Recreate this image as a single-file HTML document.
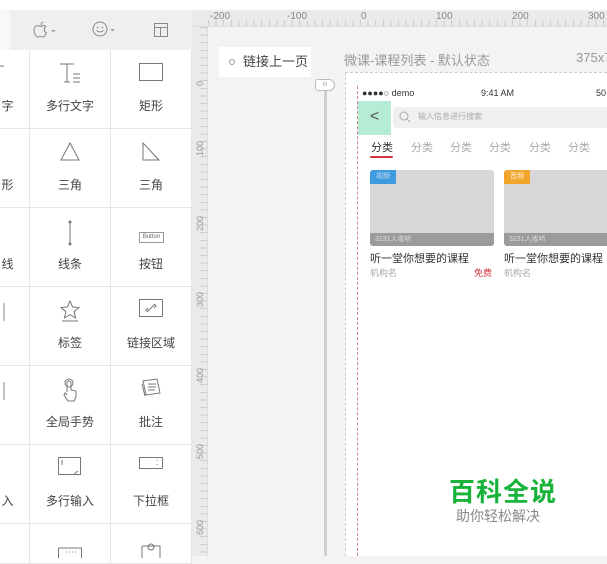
<!DOCTYPE html><html><head><meta charset="utf-8"><style>
*{margin:0;padding:0;box-sizing:border-box}
body{width:607px;height:556px;overflow:hidden;background:#f3f3f4;font-family:"Liberation Sans","Noto Sans CJK SC",sans-serif;position:relative;color:#333}
.a{position:absolute}
.cell{position:absolute;border-right:1px solid #e6e6e8;border-bottom:1px solid #e6e6e8;background:#fff;text-align:center;font-size:12px;color:#444;overflow:hidden}
.cell svg{position:absolute;left:50%;transform:translateX(-50%);top:12px}
.cell span{position:absolute;left:0;right:0;top:47px}
.vr{position:absolute;left:192px;width:16px;font-size:9px;color:#999;transform:rotate(-90deg)}
.hr{position:absolute;top:11px;font-size:10px;color:#888}
.tab{position:absolute;top:139px;font-size:11px;color:#aaa}
</style></head><body>
<div class="a" style="left:0;top:0;width:607px;height:10px;background:#fff"></div>
<div class="a" style="left:10px;top:10px;width:182px;height:40px;background:#efeff1"></div>
<div class="a" style="left:0;top:10px;width:10px;height:40px;background:#f8f8f8"></div>
<svg class="a" style="left:32px;top:21px" width="26" height="18"><path d="M7 5c-2-1-5 0-5 4 0 4 2.5 7 4 7 1 0 1.5-.6 2.5-.6s1.5.6 2.5.6c1.5 0 3-2.5 3.5-4-1.5-.7-2.3-2-2.3-3.5 0-1.3.7-2.3 1.6-2.9C13 4.5 11.8 4.4 11 4.6 10 4.9 9 5.5 8 5.2z M9 4c0-1.5 1-2.8 2.5-3" fill="none" stroke="#888"/><path d="M19 9l2.5 2.5L24 9z" fill="#aaa"/></svg>
<svg class="a" style="left:92px;top:21px" width="26" height="18"><circle cx="8" cy="8" r="7" fill="none" stroke="#888"/><circle cx="5.5" cy="6.5" r=".8" fill="#888"/><circle cx="10.5" cy="6.5" r=".8" fill="#888"/><path d="M4.5 9.5q3.5 3 7 0" fill="none" stroke="#888"/><path d="M18 8l2.5 2.5 2.5-2.5z" fill="#aaa"/></svg>
<svg class="a" style="left:154px;top:23px" width="14" height="14"><rect x=".5" y=".5" width="13" height="13" fill="none" stroke="#888"/><path d="M.5 4.5h13M6.5 4.5v9" stroke="#888"/></svg>
<div class="a" style="left:0;top:50px;width:192px;height:506px;background:#fff"></div>
<div class="cell" style="left:0;top:50px;width:30px;height:79px"><span style="left:-14px">字</span><svg width="6" height="20" style="left:0;transform:none;top:14px"><path d="M0 2h4" stroke="#777"/></svg></div>
<div class="cell" style="left:30px;top:50px;width:81px;height:79px"><svg width="22" height="22"><path d="M1 2h14M8 2v18M5 20h6M14 12h7M14 16h7M14 20h7" stroke="#777" fill="none"/></svg><span>多行文字</span></div>
<div class="cell" style="left:111px;top:50px;width:81px;height:79px"><svg width="24" height="20"><rect x=".5" y="1.5" width="23" height="17" fill="none" stroke="#777"/></svg><span>矩形</span></div>
<div class="cell" style="left:0;top:129px;width:30px;height:79px"><span style="left:-14px">形</span></div>
<div class="cell" style="left:30px;top:129px;width:81px;height:79px"><svg width="20" height="20"><path d="M10 2L1 19h18z" fill="none" stroke="#777"/></svg><span>三角</span></div>
<div class="cell" style="left:111px;top:129px;width:81px;height:79px"><svg width="20" height="20"><path d="M2 2v17h16z" fill="none" stroke="#777"/></svg><span>三角</span></div>
<div class="cell" style="left:0;top:208px;width:30px;height:79px"><span style="left:-14px">线</span></div>
<div class="cell" style="left:30px;top:208px;width:81px;height:79px"><svg width="8" height="26"><path d="M4 2v22" stroke="#777"/><circle cx="4" cy="2" r="1.5" fill="#777"/><circle cx="4" cy="24" r="1.5" fill="#777"/></svg><span>线条</span></div>
<div class="cell" style="left:111px;top:208px;width:81px;height:79px"><div class="a" style="left:28px;top:24px;width:25px;height:11px;border:1px solid #999;font-size:6px;line-height:9px;color:#666">Button</div><span>按钮</span></div>
<div class="cell" style="left:0;top:287px;width:30px;height:79px"><svg width="6" height="20" style="left:0;transform:none;top:16px"><path d="M4 0v18" stroke="#888"/></svg></div>
<div class="cell" style="left:30px;top:287px;width:81px;height:79px"><svg width="22" height="24"><path d="M11 2l2.6 6 6.4.5-4.9 4.2 1.5 6.3L11 15.6 5.4 19l1.5-6.3L2 8.5 8.4 8z" fill="none" stroke="#777"/><path d="M3 22h16" stroke="#777"/></svg><span>标签</span></div>
<div class="cell" style="left:111px;top:287px;width:81px;height:79px"><svg width="24" height="20"><rect x=".5" y=".5" width="23" height="17" fill="none" stroke="#777"/><path d="M8 13l8-8M9 9l-2 2 2 2M15 9l2-2-2-2" stroke="#777" fill="none"/></svg><span>链接区域</span></div>
<div class="cell" style="left:0;top:366px;width:30px;height:79px"><svg width="6" height="20" style="left:0;transform:none;top:16px"><path d="M4 0v18" stroke="#888"/></svg></div>
<div class="cell" style="left:30px;top:366px;width:81px;height:79px"><svg width="22" height="24"><path d="M8 14V5a2 2 0 014 0v7l5 1v6l-2 4H9l-4-6 1-2 2 2" fill="none" stroke="#777"/><circle cx="10" cy="5" r="4" fill="none" stroke="#777"/></svg><span>全局手势</span></div>
<div class="cell" style="left:111px;top:366px;width:81px;height:79px"><svg width="22" height="20"><path d="M3 3l14-2 3 14-14 2z M2 6l3 12" fill="none" stroke="#777"/><path d="M8 6h8M8 9h8M8 12h7" stroke="#777"/></svg><span>批注</span></div>
<div class="cell" style="left:0;top:445px;width:30px;height:79px"><span style="left:-14px">入</span></div>
<div class="cell" style="left:30px;top:445px;width:81px;height:79px"><svg width="24" height="20"><rect x=".5" y=".5" width="22" height="17" fill="none" stroke="#777"/><path d="M4 3v5M20 14l-4 3" stroke="#777"/></svg><span>多行输入</span></div>
<div class="cell" style="left:111px;top:445px;width:81px;height:79px"><svg width="24" height="14"><rect x=".5" y=".5" width="23" height="11" fill="none" stroke="#777"/><path d="M18 3v1M18 7v1" stroke="#777"/></svg><span>下拉框</span></div>
<div class="cell" style="left:0;top:524px;width:30px;height:40px"></div>
<div class="cell" style="left:30px;top:524px;width:81px;height:40px"><svg width="24" height="14" style="top:20px"><path d="M.5 4h23v10M.5 4v10" fill="none" stroke="#777"/><path d="M8 8h10" stroke="#777" stroke-dasharray="1 2"/></svg></div>
<div class="cell" style="left:111px;top:524px;width:81px;height:40px"><svg width="20" height="16" style="top:18px"><path d="M1 4h18v12M1 4v12" fill="none" stroke="#777"/><circle cx="10" cy="5" r="3" fill="none" stroke="#777"/></svg></div>
<div class="a" style="left:192px;top:10px;width:16px;height:546px;background:#eaeaec;border-right:1px solid #dcdcde"></div>
<div class="a" style="left:192px;top:10px;width:415px;height:17px;background:#eaeaec;border-bottom:1px solid #dcdcde"></div>
<div class="a" style="left:208px;top:20px;width:399px;height:6px;background:repeating-linear-gradient(90deg,#ccc 0 1px,transparent 1px 7.6px)"></div>
<div class="a" style="left:200px;top:27px;width:7px;height:529px;background:repeating-linear-gradient(180deg,#ccc 0 1px,transparent 1px 7.6px)"></div>
<div class="hr" style="left:210px">-200</div><div class="hr" style="left:287px">-100</div><div class="hr" style="left:361px">0</div><div class="hr" style="left:436px">100</div><div class="hr" style="left:512px">200</div><div class="hr" style="left:588px">300</div>
<div class="vr" style="top:73px">0</div><div class="vr" style="top:143px">100</div><div class="vr" style="top:218px">200</div><div class="vr" style="top:294px">300</div><div class="vr" style="top:370px">400</div><div class="vr" style="top:446px">500</div><div class="vr" style="top:522px">600</div>
<div class="a" style="left:219px;top:47px;width:92px;height:30px;background:#fff;font-size:13px;line-height:30px;color:#444;padding-left:10px"><span style="display:inline-block;width:6px;height:6px;border:1px solid #999;border-radius:50%;margin-right:8px;vertical-align:1px"></span>链接上一页</div>
<div class="a" style="left:344px;top:50px;font-size:13px;color:#999">微课-课程列表 - 默认状态</div>
<div class="a" style="left:576px;top:50px;font-size:13px;color:#999">375x7</div>
<div class="a" style="left:324px;top:88px;width:3px;height:468px;background:#cfcfd1"></div>
<div class="a" style="left:315px;top:79px;width:20px;height:12px;background:#fff;border:1px solid #bbb;border-radius:3px 6px 6px 3px;font-size:6px;color:#aaa;text-align:center;line-height:10px">III</div>
<div class="a" style="left:345px;top:72px;width:262px;height:484px;background:#fff;border-left:1px dashed #ccc;border-top:1px dashed #ccc"></div>
<div class="a" style="left:357px;top:86px;width:0;height:470px;border-left:1px dashed #c88"></div>
<div class="a" style="left:362px;top:88px;font-size:9px;color:#333">●●●●○ demo</div>
<div class="a" style="left:481px;top:88px;font-size:9px;color:#333">9:41 AM</div>
<div class="a" style="left:596px;top:88px;font-size:9px;color:#333">50</div>
<div class="a" style="left:358px;top:101px;width:33px;height:34px;background:#b5ecd6;font-size:16px;color:#555;text-align:center;line-height:32px">&lt;</div>
<div class="a" style="left:393px;top:107px;width:220px;height:21px;background:#f0f0f2;border-radius:4px"></div>
<svg class="a" style="left:399px;top:111px" width="12" height="12"><circle cx="5" cy="5" r="4" fill="none" stroke="#aaa"/><path d="M8 8l3 3" stroke="#aaa"/></svg>
<div class="a" style="left:418px;top:111px;font-size:8px;color:#aaa">输入信息进行搜索</div>
<div class="tab" style="left:371px;color:#333">分类</div><div class="tab" style="left:411px">分类</div><div class="tab" style="left:450px">分类</div><div class="tab" style="left:489px">分类</div><div class="tab" style="left:529px">分类</div><div class="tab" style="left:568px">分类</div>
<div class="a" style="left:370px;top:156px;width:23px;height:2px;background:#d0353d;border-radius:1px"></div>
<div class="a" style="left:370px;top:170px;width:124px;height:76px;background:#d7d7d7;border-radius:3px;overflow:hidden"><div class="a" style="left:0;top:0;width:26px;height:14px;background:#3e9be0;font-size:7px;color:#cde;line-height:14px;text-align:center">视频</div><div class="a" style="left:0;bottom:0;width:100%;height:13px;background:#9b9b9b;font-size:7px;color:#ddd;line-height:13px;padding-left:5px">3231人收听</div></div>
<div class="a" style="left:504px;top:170px;width:110px;height:76px;background:#d7d7d7;border-radius:3px;overflow:hidden"><div class="a" style="left:0;top:0;width:26px;height:14px;background:#f2a52c;font-size:7px;color:#fed;line-height:14px;text-align:center">音频</div><div class="a" style="left:0;bottom:0;width:100%;height:13px;background:#9b9b9b;font-size:7px;color:#ddd;line-height:13px;padding-left:5px">3231人收听</div></div>
<div class="a" style="left:370px;top:250px;font-size:11px;color:#333">听一堂你想要的课程</div>
<div class="a" style="left:504px;top:250px;font-size:11px;color:#333">听一堂你想要的课程</div>
<div class="a" style="left:370px;top:266px;font-size:9px;color:#aaa">机构名</div>
<div class="a" style="left:504px;top:266px;font-size:9px;color:#aaa">机构名</div>
<div class="a" style="left:474px;top:266px;font-size:9px;color:#d0353d">免费</div>
<div class="a" style="left:449px;top:472px;font-size:26px;font-weight:bold;color:#18b33a;letter-spacing:1px">百科全说</div>
<div class="a" style="left:456px;top:506px;font-size:14px;color:#888">助你轻松解决</div>
</body></html>
